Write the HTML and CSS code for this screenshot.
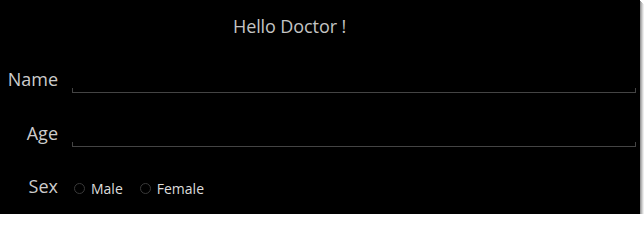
FILE: index.html
```html
<!DOCTYPE html>
<html>
<head>
<meta charset="utf-8">
<link rel="stylesheet" href="styles.css">
</head>
<body>
<div class="screen">
  <div class="title">Hello Doctor !</div>
  <div class="row">
    <div class="label">Name</div>
    <div class="field"></div>
  </div>
  <div class="row">
    <div class="label">Age</div>
    <div class="field"></div>
  </div>
  <div class="row sex">
    <div class="label">Sex</div>
    <div class="radios">
      <div class="radio"><span class="dot"></span><span class="rtext">Male</span></div>
      <div class="radio"><span class="dot"></span><span class="rtext">Female</span></div>
    </div>
  </div>
</div>
</body>
</html>
```
FILE: styles.css
```css
html, body {
  margin: 0;
  padding: 0;
  background: #ffffff;
}
.screen {
  width: 640px;
  height: 214px;
  background: #000000;
  box-shadow: 1px 1px 0 #9a9a9a, 2px 2px 0 #b8b8b8, 3px 3px 0 #d6d6d6, 4px 4px 0 #eeeeee;
  font-family: "Open Sans", "Noto Sans", sans-serif;
  color: #c8c8c8;
  padding-top: 14px;
  box-sizing: border-box;
  overflow: hidden;
}
.title {
  height: 24px;
  line-height: 24px;
  font-size: 18px;
  margin-left: 233px;
  letter-spacing: -0.1px;
  color: #c4c4c4;
}
.row {
  display: flex;
  align-items: flex-start;
  margin-top: 29px;
  padding-right: 4px;
}
.row + .row {
  margin-top: 28px;
}
.row.sex {
  margin-top: 27px;
}
.label {
  width: 58px;
  text-align: right;
  font-size: 18px;
  line-height: 24px;
  color: #cccccc;
  flex: none;
}
.field {
  flex: 1;
  margin-left: 14px;
  height: 26px;
  box-sizing: border-box;
  border-bottom: 1px solid #444444;
  position: relative;
}
.field::before,
.field::after {
  content: "";
  position: absolute;
  bottom: 0;
  width: 1px;
  height: 4px;
  background: #444444;
}
.field::before { left: 0; }
.field::after { right: 0; }
.radios {
  display: flex;
  align-items: center;
  margin-left: 16px;
  height: 24px;
  margin-top: 2px;
}
.radio {
  display: flex;
  align-items: center;
  margin-right: 17px;
}
.dot {
  width: 9px;
  height: 9px;
  border: 1.5px solid #3a3a3a;
  border-radius: 50%;
  flex: none;
}
.rtext {
  margin-left: 6px;
  font-size: 14px;
  color: #dcdcdc;
}
```
